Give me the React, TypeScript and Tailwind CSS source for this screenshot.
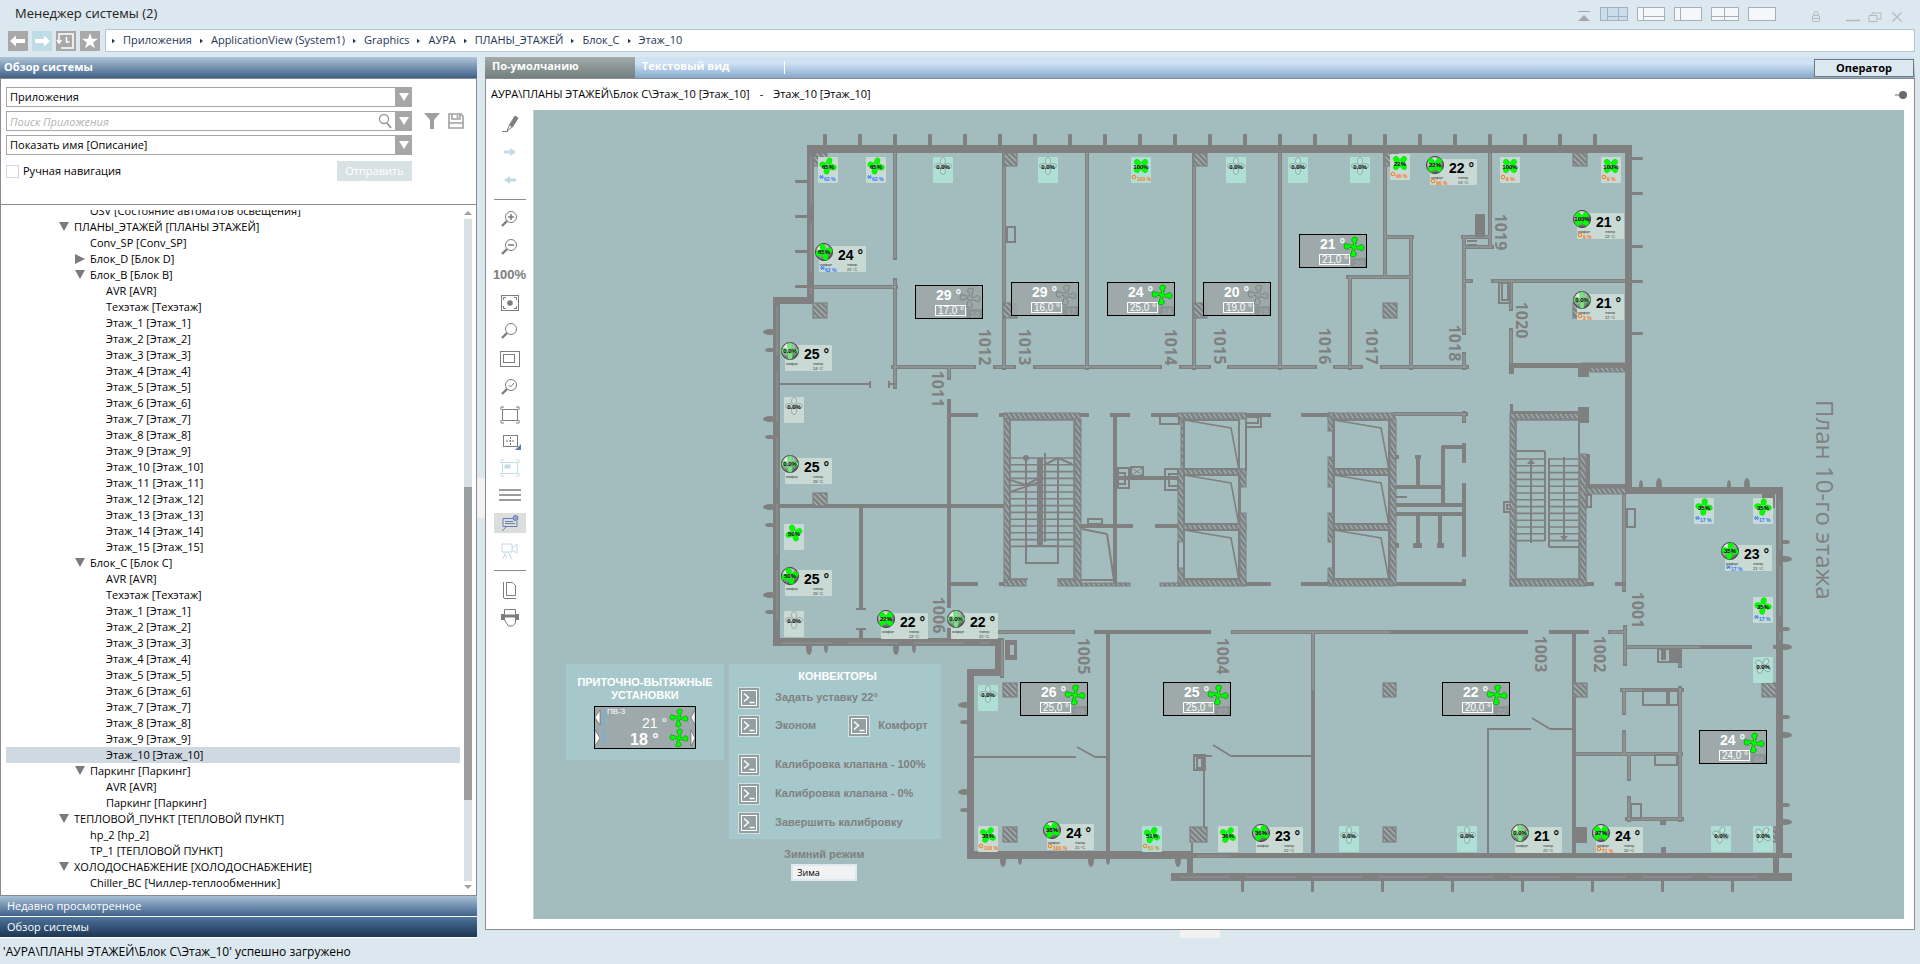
import React from "react";

type TreeItem = { text: string; level: 0 | 1 | 2; state?: "open" | "closed"; selected?: boolean };

const floors = (last: number): TreeItem[] =>
  Array.from({ length: last }, (_, i) => ({ text: `Этаж_${i + 1} [Этаж_${i + 1}]`, level: 2 as const }));

const floorsC = floors(10).map((f, i) => (i === 9 ? { ...f, selected: true } : f));

const TREE: TreeItem[] = [
  { text: "OSV [Состояние автоматов освещения]", level: 1 },
  { text: "ПЛАНЫ_ЭТАЖЕЙ [ПЛАНЫ ЭТАЖЕЙ]", level: 0, state: "open" },
  { text: "Conv_SP [Conv_SP]", level: 1 },
  { text: "Блок_D [Блок D]", level: 1, state: "closed" },
  { text: "Блок_B [Блок B]", level: 1, state: "open" },
  { text: "AVR [AVR]", level: 2 },
  { text: "Техэтаж [Техэтаж]", level: 2 },
  ...floors(15),
  { text: "Блок_C [Блок C]", level: 1, state: "open" },
  { text: "AVR [AVR]", level: 2 },
  { text: "Техэтаж [Техэтаж]", level: 2 },
  ...floorsC,
  { text: "Паркинг [Паркинг]", level: 1, state: "open" },
  { text: "AVR [AVR]", level: 2 },
  { text: "Паркинг [Паркинг]", level: 2 },
  { text: "ТЕПЛОВОЙ_ПУНКТ [ТЕПЛОВОЙ ПУНКТ]", level: 0, state: "open" },
  { text: "hp_2 [hp_2]", level: 1 },
  { text: "TP_1 [ТЕПЛОВОЙ ПУНКТ]", level: 1 },
  { text: "ХОЛОДОСНАБЖЕНИЕ [ХОЛОДОСНАБЖЕНИЕ]", level: 0, state: "open" },
  { text: "Chiller_BC [Чиллер-теплообменник]", level: 1 },
];

const CRUMBS = ["Приложения", "ApplicationView (System1)", "Graphics", "АУРА", "ПЛАНЫ_ЭТАЖЕЙ", "Блок_C", "Этаж_10"];

/* ---------- floor plan geometry ---------- */

type Seg = [number, number, number, number];

// Outer and solid walls: x, y, width, height
const SOLID: Seg[] = [
  [807, 145, 825, 8], [807, 145, 7, 157], [773, 297, 39, 5], [773, 297, 7, 348], [773, 638, 228, 8],
  [1625, 145, 7, 343], [1625, 487, 158, 7], [1776, 487, 7, 371], [1762, 494, 13, 14],
  [995, 640, 6, 34], [967, 669, 34, 7], [967, 669, 7, 190], [967, 851, 226, 8],
  [1190, 853, 602, 5], [1171, 873, 621, 8], [1187, 851, 6, 26], [1773, 853, 6, 24],
  [1475, 214, 10, 23], [1511, 363, 114, 5], [1509, 363, 5, 11], [1578, 367, 11, 10],
  [1573, 827, 14, 16], [1586, 484, 40, 4], [1586, 454, 4, 33], [1578, 407, 11, 16], [1511, 411, 70, 3], [1510, 404, 3, 10],
  [1661, 649, 5, 11], [1669, 649, 10, 12], [1666, 690, 4, 15], [1660, 820, 6, 5], [1661, 847, 5, 6],
  [1037, 458, 6, 88], [1413, 543, 9, 5], [1415, 455, 6, 4], [1437, 543, 7, 5], [1395, 543, 4, 5], [1395, 455, 4, 4], [1773, 645, 9, 4],
];

// Interior solid partitions: x1, y1, x2, y2
const WALLS: Seg[] = [
  [949, 399, 949, 608], [949, 628, 949, 638], [949, 415, 978, 415], [999, 415, 1089, 415],
  [780, 506, 1004, 506], [861, 508, 861, 609], [861, 629, 861, 638], [949, 584, 978, 584], [999, 584, 1006, 584],
  [1115, 415, 1115, 583], [1110, 415, 1130, 415], [1151, 415, 1180, 415], [1081, 526, 1133, 526], [1155, 526, 1178, 526],
  [1117, 478, 1178, 478], [1246, 415, 1271, 415], [1246, 584, 1271, 584], [1301, 415, 1328, 415], [1301, 584, 1328, 584],
  [1442, 447, 1466, 447], [1464, 443, 1464, 463], [1443, 446, 1443, 503], [1396, 487, 1443, 487], [1396, 505, 1465, 505],
  [1396, 514, 1465, 514], [1464, 483, 1464, 557], [1418, 457, 1418, 487], [1418, 514, 1418, 546], [1440, 514, 1440, 546],
  [1396, 584, 1466, 584], [1464, 579, 1464, 586], [1586, 584, 1594, 584], [1615, 584, 1626, 584],
  [1094, 632, 1211, 632], [1390, 632, 1528, 632], [1549, 632, 1589, 632],
  [1108, 632, 1108, 853], [1313, 690, 1313, 853], [1574, 632, 1574, 853], [1700, 647, 1752, 647],
];

const DOUBLE: Seg[] = [
  [895, 153, 895, 258], [814, 287, 896, 287], [895, 280, 895, 387], [1004, 153, 1004, 368], [1087, 153, 1087, 368],
  [1194, 153, 1194, 368], [893, 367, 974, 367], [995, 367, 1014, 367], [1035, 367, 1160, 367], [1181, 367, 1209, 367],
  [1229, 367, 1315, 367], [1335, 367, 1361, 367], [1382, 367, 1467, 367], [949, 367, 949, 378],
  [1280, 153, 1280, 368], [1385, 153, 1385, 276], [1385, 237, 1412, 237], [1411, 237, 1411, 368], [1348, 277, 1411, 277],
  [1350, 277, 1350, 368], [1490, 153, 1490, 247], [1463, 237, 1490, 237], [1464, 237, 1464, 333], [1464, 247, 1492, 247],
  [1464, 281, 1471, 281], [1464, 354, 1464, 368], [1493, 281, 1625, 281], [1511, 281, 1511, 309], [1511, 330, 1511, 365],
  [1395, 414, 1466, 414], [1464, 413, 1464, 421], [1624, 494, 1624, 590],
  [999, 632, 1073, 632], [1233, 632, 1390, 632], [1610, 632, 1625, 632], [1625, 627, 1625, 664], [1627, 647, 1700, 647],
  [1313, 632, 1313, 690], [1680, 648, 1680, 666], [1622, 690, 1682, 690], [1624, 690, 1624, 713], [1680, 688, 1680, 820], [1624, 732, 1624, 754],
  [1576, 754, 1681, 754], [1629, 754, 1629, 779], [1629, 798, 1629, 820], [1627, 819, 1682, 819], [1002, 640, 1002, 676],
];

const THIN: Seg[] = [
  [780, 384, 870, 384], [870, 381, 870, 388], [889, 384, 896, 384], [889, 381, 889, 388], [779, 303, 813, 303],
  [974, 757, 1076, 757], [1095, 757, 1107, 757], [1077, 747, 1095, 757], [1231, 756, 1312, 756], [1213, 745, 1231, 756],
  [1194, 756, 1212, 756], [1204, 757, 1204, 828], [1192, 843, 1192, 852], [1488, 728, 1488, 853], [1488, 729, 1531, 729],
  [1550, 729, 1574, 729], [1532, 718, 1550, 729], [1467, 241, 1477, 241], [1467, 245, 1477, 245], [1081, 580, 1115, 580],
  [1082, 529, 1107, 534], [1107, 534, 1114, 580], [1396, 497, 1407, 497], [1010, 480, 1026, 485], [1026, 485, 1039, 478],
  [1010, 492, 1040, 482], [1046, 464, 1058, 458], [1058, 458, 1072, 464], [1045, 453, 1045, 542], [1026, 458, 1026, 546],
  [1058, 458, 1058, 546], [1246, 420, 1246, 470], [1240, 487, 1240, 513], [1178, 542, 1178, 570], [1333, 431, 1333, 457],
  [1333, 487, 1333, 513], [1333, 542, 1333, 568], [1579, 420, 1579, 454],
  [1516, 451, 1545, 451], [1545, 451, 1545, 541], [1549, 458, 1549, 547], [1549, 547, 1579, 547], [1531, 461, 1531, 543], [1564, 457, 1564, 541],
  [856, 609, 866, 609], [856, 629, 866, 629],
];

// Outlined ducts and shafts
const BOXES: Seg[] = [
  [1007, 227, 8, 15], [1499, 283, 11, 20], [1502, 283, 6, 17], [1088, 519, 14, 5], [1118, 468, 11, 20], [1118, 473, 7, 11],
  [1131, 467, 12, 9], [1165, 469, 13, 21], [1169, 474, 9, 12], [1026, 546, 32, 17], [1246, 417, 15, 10], [1246, 417, 12, 6],
  [1504, 502, 7, 10], [1507, 505, 4, 4], [1587, 495, 4, 12], [1627, 509, 8, 18], [1194, 755, 11, 15], [1197, 758, 5, 10],
  [1658, 649, 22, 13], [1643, 690, 35, 15], [1655, 755, 22, 10], [1631, 804, 10, 14], [1160, 416, 19, 8],
];

// Hatched columns
const HATCH: Seg[] = [
  [814, 153, 13, 13], [813, 303, 14, 15], [1004, 153, 13, 13], [1003, 303, 14, 15], [1194, 153, 13, 13], [1194, 303, 13, 15],
  [1385, 153, 13, 13], [1383, 303, 14, 15], [1573, 153, 14, 13], [1573, 303, 14, 15], [813, 493, 14, 13], [813, 576, 14, 14],
  [1003, 683, 14, 14], [1003, 827, 14, 15], [1193, 683, 14, 14], [1190, 827, 17, 15], [1383, 683, 13, 14], [1383, 827, 13, 15],
  [1573, 683, 14, 14], [1762, 683, 14, 14], [1762, 827, 14, 15],
];

// Hatched structural walls of the staircases and lift shafts
const CORE: Seg[] = [
  [1004, 413, 76, 6], [1004, 419, 6, 166], [1075, 419, 6, 166], [1004, 580, 22, 6], [1058, 580, 23, 6], [1081, 583, 49, 3],
  [1178, 413, 68, 6], [1178, 469, 68, 6], [1178, 524, 68, 6], [1178, 580, 68, 6], [1178, 469, 6, 73], [1178, 568, 6, 16], [1181, 419, 3, 50],
  [1240, 469, 6, 18], [1240, 513, 6, 72], [1160, 583, 20, 3],
  [1328, 413, 67, 6], [1333, 469, 62, 6], [1333, 524, 62, 6], [1328, 580, 67, 6], [1390, 419, 6, 166],
  [1328, 413, 5, 18], [1328, 457, 5, 30], [1328, 513, 5, 29], [1328, 568, 5, 16],
  [1510, 413, 70, 6], [1510, 419, 5, 166], [1580, 454, 6, 130], [1510, 580, 76, 6],
  [1586, 488, 40, 6], [1582, 363, 43, 9],
];

const CABINS: [number, number][] = [
  [1184, 420], [1184, 475], [1184, 530], [1334, 420], [1334, 475], [1334, 530],
];

const TOP_TICKS = Array.from({ length: 23 }, (_, i) => 825 + i * 35);
const BOTTOM_TICKS = Array.from({ length: 8 }, (_, i) => 1243 + i * 70);

// Mullions: centre x, centre y, rx, ry
const MULLIONS: Seg[] = [
  ...[332, 419, 507, 595].map((y): Seg => [770, y, 7, 3]),
  ...[350, 437, 525, 612].map((y): Seg => [770, y, 5, 2]),
  ...[809, 896].map((x): Seg => [x, 648, 3, 7]),
  ...[826, 914].map((x): Seg => [x, 647, 2, 6]),
  ...[705, 792].map((y): Seg => [965, y, 7, 3]),
  ...[722, 810].map((y): Seg => [965, y, 5, 2]),
  ...[1003, 1091, 1178].map((x): Seg => [x, 860, 3, 7]),
  ...[1020, 1108].map((x): Seg => [x, 859, 2, 6]),
  ...[1659, 1747].map((x): Seg => [x, 485, 3, 7]),
  ...[1641, 1729].map((x): Seg => [x, 486, 2, 6]),
  ...[559, 647, 735, 822].map((y): Seg => [1785, y, 7, 3]),
  ...[542, 629, 717, 805].map((y): Seg => [1785, y, 5, 2]),
];

const ROOMS: [string, number, number][] = [
  ["1012", 985, 347], ["1013", 1025, 347], ["1014", 1171, 347], ["1011", 938, 389], ["1015", 1220, 346], ["1016", 1325, 346],
  ["1017", 1372, 346], ["1018", 1455, 343], ["1019", 1501, 232], ["1020", 1522, 320], ["1006", 939, 615], ["1001", 1638, 610],
  ["1005", 1084, 656], ["1004", 1223, 656], ["1003", 1541, 654], ["1002", 1600, 654],
];

type Valve = { kind: "cold" | "hot"; value: string };
type Tile = { x: number; y: number; mint?: boolean; pct?: string; valve?: Valve; turn?: number };

const cold = (value: string): Valve => ({ kind: "cold", value });
const hot = (value: string): Valve => ({ kind: "hot", value });

const TILES: Tile[] = [
  { x: 818, y: 157, pct: "65%", valve: cold("62 %"), turn: 15 },
  { x: 866, y: 157, pct: "65%", valve: cold("62 %"), turn: 15 },
  { x: 933, y: 157, mint: true },
  { x: 1038, y: 157, mint: true },
  { x: 1131, y: 157, mint: true, pct: "100%", valve: hot("100 %"), turn: 45 },
  { x: 1226, y: 157, mint: true },
  { x: 1288, y: 157, mint: true },
  { x: 1350, y: 157, mint: true },
  { x: 1390, y: 154, pct: "22%", valve: hot("96 %"), turn: 45 },
  { x: 1500, y: 157, pct: "100%", valve: hot("9 %"), turn: 45 },
  { x: 1601, y: 157, pct: "100%", valve: hot("9 %"), turn: 45 },
  { x: 784, y: 397 },
  { x: 784, y: 524, pct: "50%", turn: -20 },
  { x: 784, y: 611 },
  { x: 1694, y: 498, pct: "35%", valve: cold("17 %"), turn: 8 },
  { x: 1753, y: 498, pct: "35%", valve: cold("17 %"), turn: 8 },
  { x: 1753, y: 597, pct: "35%", valve: cold("17 %"), turn: 8 },
  { x: 1753, y: 657, mint: true, turn: 35 },
  { x: 978, y: 685, mint: true },
  { x: 978, y: 826, pct: "38%", valve: hot("100 %"), turn: 30 },
  { x: 1142, y: 826, mint: true, pct: "51%", valve: hot("51 %"), turn: 25 },
  { x: 1218, y: 826, pct: "36%", turn: 30 },
  { x: 1339, y: 826, mint: true },
  { x: 1457, y: 826, mint: true },
  { x: 1711, y: 826, mint: true, turn: 15 },
  { x: 1753, y: 826, mint: true, turn: 35 },
];

type Card = { x: number; y: number; temp: number; room: number; pct?: string; valve?: Valve; turn?: number };

const CARDS: Card[] = [
  { x: 819, y: 246, temp: 24, room: 21, pct: "65%", valve: cold("62 %"), turn: -15 },
  { x: 785, y: 345, temp: 25, room: 24 },
  { x: 785, y: 458, temp: 25, room: 26 },
  { x: 785, y: 570, temp: 25, room: 26, pct: "50%", turn: -15 },
  { x: 881, y: 613, temp: 22, room: 22, pct: "22%", turn: 45 },
  { x: 951, y: 613, temp: 22, room: 22 },
  { x: 1430, y: 159, temp: 22, room: 23, pct: "22%", valve: hot("96 %"), turn: 45 },
  { x: 1577, y: 213, temp: 21, room: 22, pct: "100%", valve: hot("9 %"), turn: 45 },
  { x: 1577, y: 294, temp: 21, room: 22, valve: hot("3 %") },
  { x: 1725, y: 545, temp: 23, room: 21, pct: "35%", valve: cold("17 %"), turn: 8 },
  { x: 1047, y: 824, temp: 24, room: 21, pct: "38%", valve: hot("100 %"), turn: 30 },
  { x: 1256, y: 827, temp: 23, room: 22, pct: "36%", turn: 30 },
  { x: 1515, y: 827, temp: 21, room: 22 },
  { x: 1596, y: 827, temp: 24, room: 20, pct: "97%", valve: hot("71 %"), turn: 45 },
];

type Zone = { x: number; y: number; temp: number; set: string; id: string; on: boolean };

const ZONES: Zone[] = [
  { x: 915, y: 285, temp: 29, set: "17,0", id: "16", on: false },
  { x: 1011, y: 282, temp: 29, set: "16,0", id: "17", on: false },
  { x: 1107, y: 282, temp: 24, set: "25,0", id: "18", on: true },
  { x: 1203, y: 282, temp: 20, set: "19,0", id: "19", on: false },
  { x: 1299, y: 234, temp: 21, set: "21,0", id: "20", on: true },
  { x: 1020, y: 682, temp: 26, set: "25,0", id: "09", on: true },
  { x: 1163, y: 682, temp: 25, set: "25,0", id: "07", on: true },
  { x: 1442, y: 682, temp: 22, set: "20,0", id: "22", on: true },
  { x: 1699, y: 730, temp: 24, set: "24,0", id: "04", on: true },
];

const QUARTERS = [0, 90, 180, 270];

/** Four rounded blades, used on the convector symbols. */
function Blades({ on, turn = 0, dim }: { on: boolean; turn?: number; dim?: boolean }) {
  return (
    <g transform={`rotate(${turn})`}>
      {QUARTERS.map((a) => (
        <ellipse
          key={a}
          cx="0"
          cy="-5"
          rx={on ? 2.8 : 2.5}
          ry="3.5"
          transform={`rotate(${a})`}
          fill={on ? "#00ff00" : dim ? "#7fe08a" : "#ffffff22"}
          stroke={on || dim ? "#16b816" : "#8f9a96"}
          strokeWidth={on || dim ? 0.3 : 0.8}
        />
      ))}
    </g>
  );
}

const BLADE = "M-1 0 L-1.2 -4 C-3 -4.8 -4.3 -6 -3.6 -8.2 C-2.8 -10.2 0.6 -10.4 2.2 -9 C1 -7.6 1.2 -4 1.4 0 Z";

/** Propeller with swept blades, used on the air handling symbols. */
function Propeller({ on }: { on: boolean }) {
  return (
    <g transform="rotate(12)">
      {QUARTERS.map((a) => (
        <path key={a} d={BLADE} transform={`rotate(${a})`} fill={on ? "#00ff00" : "#9ba6a6"} stroke={on ? "#0f9a0f" : "#747c7c"} strokeWidth="0.8" />
      ))}
      <circle r="2" fill={on ? "#00ff00" : "#9ba6a6"} />
    </g>
  );
}

function ValveMark({ valve, x, y }: { valve: Valve; x: number; y: number }) {
  const tint = valve.kind === "cold" ? "#1f78ff" : "#ff7514";
  return (
    <g>
      {valve.kind === "cold" ? (
        <path d={`M${x} ${y}h5M${x + 1} ${y - 2}l3 4M${x + 4} ${y - 2}l-3 4`} stroke={tint} strokeWidth="0.8" />
      ) : (
        <circle cx={x + 2} cy={y} r="1.8" fill="none" stroke={tint} strokeWidth="1" />
      )}
      <text x={x + 5} y={y + 4} fontSize="5" fontWeight="700" fill={tint}>
        {valve.value}
      </text>
    </g>
  );
}

function TileMark({ tile }: { tile: Tile }) {
  return (
    <g transform={`translate(${tile.x} ${tile.y})`}>
      <rect width="20" height="26" rx="1" fill={tile.mint ? "#afe0d6" : "#c9d9d3"} />
      <g transform="translate(10 9)">
        <Blades on={!!tile.pct} turn={tile.turn} />
      </g>
      <text x="10" y="12" fontSize="6" fontWeight="700" textAnchor="middle" fill="#000">
        {tile.pct ?? "0.0%"}
      </text>
      {tile.valve && <ValveMark valve={tile.valve} x={1} y={20} />}
    </g>
  );
}

function CardMark({ card }: { card: Card }) {
  return (
    <g transform={`translate(${card.x} ${card.y})`}>
      <rect width="47" height="26" rx="1" fill="#c9d9d3" />
      <circle cx="5" cy="6" r="8.5" fill="url(#ball)" stroke="#3c3c3c" strokeWidth="1" />
      <g transform="translate(5 6)">
        <Blades on={!!card.pct} dim={!card.pct} turn={card.turn} />
      </g>
      <text x="5" y="8" fontSize="6" fontWeight="700" textAnchor="middle" fill="#000">
        {card.pct ?? "0.0%"}
      </text>
      <text x="19" y="14" fontSize="14" fontWeight="700" fill="#000">
        {card.temp} °
      </text>
      <text x="1" y="20" fontSize="3" fill="#333">
        комфорт
      </text>
      <text x="28" y="20" fontSize="3" fill="#333">
        темпер.
      </text>
      <text x="28" y="25" fontSize="4" fill="#333">
        {card.room} °C
      </text>
      {card.valve && <ValveMark valve={card.valve} x={1} y={22} />}
    </g>
  );
}

function ZoneMark({ zone }: { zone: Zone }) {
  return (
    <g transform={`translate(${zone.x} ${zone.y})`}>
      <rect x="0.5" y="0.5" width="67" height="33" fill="#9da7a7" fillOpacity="0.93" stroke="#000" />
      <rect x="52" y="24" width="15" height="9" fill="#8c9595" />
      <text x="60" y="32" fontSize="8" textAnchor="middle" fill="#a9b1b1">
        {zone.id}
      </text>
      <text x="21" y="15" fontSize="14" fontWeight="700" fill="#fff">
        {zone.temp} °
      </text>
      <rect x="20.5" y="20.5" width="30" height="10" fill="none" stroke="#fff" />
      <text x="36" y="29" fontSize="10" textAnchor="middle" fill="#fff">
        {zone.set} °
      </text>
      <g transform="translate(55 13)">
        <Propeller on={zone.on} />
      </g>
    </g>
  );
}

const lines = (list: Seg[]) => list.map(([a, b, c, d]) => `M${a} ${b}L${c} ${d}`).join("");

function FloorPlan() {
  return (
    <svg viewBox="534 110 1370 809" className="h-[809px] w-[1370px]" fontFamily="'Liberation Sans', Arial, sans-serif" aria-label="План 10-го этажа">
      <defs>
        <pattern id="hatch" width="4" height="4" patternUnits="userSpaceOnUse" patternTransform="rotate(-45)">
          <rect width="4" height="4" fill="#808080" />
          <rect width="1.2" height="4" fill="#a3bdbe" />
        </pattern>
        <pattern id="core" width="4" height="4" patternUnits="userSpaceOnUse" patternTransform="rotate(-35)">
          <rect width="4" height="4" fill="#7d7f80" />
          <rect width="1.3" height="4" fill="#9fb6b7" />
        </pattern>
        <radialGradient id="ball" cx="0.35" cy="0.25" r="0.8">
          <stop offset="0" stopColor="#ffffff" />
          <stop offset="0.6" stopColor="#9aa09d" />
          <stop offset="1" stopColor="#4c504e" />
        </radialGradient>
      </defs>

      <g fill="#808080">
        {TOP_TICKS.map((x) => (
          <rect key={x} x={x - 2} y="134" width="4" height="12" rx="1" />
        ))}
        {BOTTOM_TICKS.map((x) => (
          <rect key={x} x={x - 2} y="880" width="3" height="12" rx="1" />
        ))}
        {[182, 217, 252, 287].map((y) => (
          <rect key={y} x="795" y={y - 2} width="13" height="3" rx="1" />
        ))}
        {[158, 193, 246, 281, 333].map((y) => (
          <rect key={y} x="1631" y={y - 1} width="12" height="3" rx="1" />
        ))}
        {MULLIONS.map(([cx, cy, rx, ry], i) => (
          <ellipse key={i} cx={cx} cy={cy} rx={rx} ry={ry} />
        ))}
      </g>

      <path d={lines(DOUBLE)} stroke="#808080" strokeWidth="4" strokeLinecap="square" />
      <path d={lines(DOUBLE)} stroke="#97a5a5" strokeWidth="1" />
      <path d={lines(WALLS)} stroke="#808080" strokeWidth="4" />
      <path d={lines(THIN)} stroke="#808080" strokeWidth="2" />

      {BOXES.map(([x, y, w, h], i) => (
        <rect key={i} x={x} y={y} width={w} height={h} fill="none" stroke="#808080" strokeWidth="2" />
      ))}
      <path d="M1132 468l10 7M1142 468l-10 7" stroke="#808080" strokeWidth="1" />
      <path fillRule="evenodd" d="M1005 640h12v20h-12z M1010 645v10h4v-10z" fill="#808080" />

      {HATCH.map(([x, y, w, h], i) => (
        <rect key={i} x={x} y={y} width={w} height={h} fill="url(#hatch)" stroke="#808080" strokeWidth="1.2" />
      ))}
      {CORE.map(([x, y, w, h], i) => (
        <rect key={i} x={x} y={y} width={w} height={h} fill="url(#core)" stroke="#808080" strokeWidth="1" />
      ))}
      {SOLID.map(([x, y, w, h], i) => (
        <rect key={i} x={x} y={y} width={w} height={h} fill="#808080" />
      ))}
      <path d="M811 156V294M777 306V636M782 643H990M1197 856H1230M1180 877H1760M1780 500V640" stroke="#8e9797" strokeWidth="1" strokeDasharray="50 16" />

      {/* lift cabins */}
      {CABINS.map(([x, y], i) => (
        <g key={i} fill="none" stroke="#808080">
          <rect x={x} y={y} width="55" height="49" strokeWidth="2" />
          <path d={`M${x} ${y}l47 8l8 42`} strokeWidth="1.6" />
        </g>
      ))}

      {/* staircases */}
      <rect x="1010" y="420" width="64" height="159" fill="none" stroke="#808080" strokeWidth="1.6" />
      <rect x="1516" y="420" width="63" height="159" fill="none" stroke="#808080" strokeWidth="1.6" />
      {Array.from({ length: 14 }, (_, i) => (
        <path key={i} d={`M1010 ${458 + i * 6.8}H1074`} stroke="#808080" strokeWidth="1.6" />
      ))}
      {Array.from({ length: 13 }, (_, i) => (
        <path key={i} d={`M1516 ${459 + i * 6.8}H1545M1549 ${459 + i * 6.8}H1579`} stroke="#808080" strokeWidth="1.6" />
      ))}
      <circle cx="1026" cy="458" r="3" fill="#808080" />
      <path d="M1531 459l-4 5h8zM1564 541l-4 -5h8z" fill="#808080" />
      <path d="M1028 579H1057" stroke="#a3bdbe" strokeWidth="3" />

      <g fill="#808080" fontFamily="'Open Sans', 'Noto Sans', sans-serif">
        {ROOMS.map(([name, x, y]) => (
          <text key={name} transform={`translate(${x - 6} ${y}) rotate(90)`} fontSize="16" fontWeight="700" textAnchor="middle">
            {name}
          </text>
        ))}
        <text transform="translate(1816 400) rotate(90)" fontSize="24">
          План 10-го этажа
        </text>
      </g>

      {ZONES.map((z) => (
        <ZoneMark key={z.id} zone={z} />
      ))}
      {TILES.map((t, i) => (
        <TileMark key={i} tile={t} />
      ))}
      {CARDS.map((c, i) => (
        <CardMark key={i} card={c} />
      ))}
    </svg>
  );
}

/* ---------- control panels on the canvas ---------- */

function CommandButton({ label }: { label: string }) {
  return (
    <button type="button" aria-label={label} className="flex size-[22px] shrink-0 items-center justify-center border border-[#d5dfdf] bg-[#93a0a1]">
      <svg viewBox="0 0 16 16" className="size-4" fill="none" stroke="#fff">
        <rect x="0.5" y="0.5" width="15" height="15" />
        <path d="M3 3.5l4.5 4l-4.5 4M8.500 12.500h5" strokeWidth="1.5" />
      </svg>
    </button>
  );
}

function CommandRow({ label }: { label: string }) {
  return (
    <div className="flex h-[22px] items-center gap-[15px]">
      <CommandButton label={label} />
      <span className="-mt-0.5">{label}</span>
    </div>
  );
}

function AirUnits() {
  return (
    <section className="absolute left-8 top-[554px] flex h-24 w-[158px] flex-col items-center bg-[#a7c8cb] pt-3">
      <h2 className="text-center text-[11px] leading-[13px] font-bold text-white">
        ПРИТОЧНО-ВЫТЯЖНЫЕ
        <br />
        УСТАНОВКИ
      </h2>
      <svg viewBox="0 0 102 43" className="mt-1 h-[43px] w-[102px]">
        <rect x="0.5" y="0.5" width="101" height="42" fill="#9da9aa" stroke="#000" />
        <path d="M6 4v15l-5 -7.500zM1 24l5 8l-5 8zM101 4v15l-4 -7.500zM97 24l4 8l-4 8z" fill="#fff" stroke="#555" strokeWidth="0.6" />
        <path d="M11 4l-1 6v10M11 38l-1 -5v-10" fill="none" stroke="#6fb4d6" strokeWidth="2" />
        <g fill="#fff">
          <text x="13" y="8" fontSize="8">ПВ-3</text>
          <text x="48" y="22" fontSize="14">21 °</text>
          <text x="36" y="39" fontSize="16" fontWeight="700">18 °</text>
        </g>
        <g transform="translate(85 12) scale(0.9)">
          <Propeller on />
        </g>
        <g transform="translate(85 32) scale(0.9)">
          <Propeller on />
        </g>
      </svg>
    </section>
  );
}

function Convectors() {
  return (
    <section className="absolute left-[195px] top-[554px] h-[175px] w-[212px] bg-[#a7c8cb] pt-[6px] pl-[9px] text-[11px] leading-[13px] font-bold text-[#808080]">
      <h2 className="pr-1 text-center text-white">КОНВЕКТОРЫ</h2>
      <div className="mt-1 flex flex-col gap-[6px]">
        <CommandRow label="Задать уставку 22°" />
        <div className="flex gap-8">
          <CommandRow label="Эконом" />
          <div className="flex h-[22px] items-center gap-2">
            <CommandButton label="Комфорт" />
            <span className="-mt-0.5">Комфорт</span>
          </div>
        </div>
        <div className="mt-[11px] flex flex-col gap-[7px]">
          <CommandRow label="Калибровка клапана - 100%" />
          <CommandRow label="Калибровка клапана - 0%" />
          <CommandRow label="Завершить калибровку" />
        </div>
      </div>
    </section>
  );
}

function WinterMode() {
  return (
    <div className="absolute left-[250px] top-[738px] flex flex-col items-center gap-[3px]">
      <label htmlFor="winter" className="text-[11px] leading-[13px] font-bold text-[#808080]">
        Зимний режим
      </label>
      <input
        id="winter"
        defaultValue="Зима"
        readOnly
        className="h-[17px] w-[66px] border-2 border-[#dde8f0] bg-[#f1f2f3] px-1 font-['Open_Sans',sans-serif] text-[9px] text-black"
      />
    </div>
  );
}

/* ---------- toolbar ---------- */

const Lens = ({ children }: { children?: React.ReactNode }) => (
  <>
    <circle cx="12" cy="8" r="5.500" strokeWidth="1" />
    <path d="M8 12L3 17" strokeWidth="2.400" />
    {children}
  </>
);

const Corners = () => <path d="M2 5V2h3M17 2h3v3M20 15v3h-3M5 18H2v-3" strokeWidth="1" />;

function Tool({ label, short, active, pale, children }: { label: string; short?: boolean; active?: boolean; pale?: boolean; children: React.ReactNode }) {
  return (
    <div className={short ? "flex h-[26px] items-center" : "flex h-7 items-center"}>
      <button
        type="button"
        aria-label={label}
        className={`flex h-5 w-8 items-center justify-center ${active ? "bg-[#dcdddd] text-[#6683b0]" : pale ? "text-[#bfdce3]" : "text-[#7b7d7e]"}`}
      >
        {children}
      </button>
    </div>
  );
}

const Glyph = ({ children }: { children: React.ReactNode }) => (
  <svg viewBox="0 0 22 20" className="h-5 w-[22px]" fill="none" stroke="currentColor" strokeWidth="1">
    {children}
  </svg>
);

const Divider = () => (
  <div className="flex h-[11px] w-8 items-center">
    <hr className="w-full border-[#8b8b8d]" />
  </div>
);

function Toolbar() {
  return (
    <div className="flex w-12 shrink-0 flex-col items-center border-r border-[#c8cccd]">
      <Tool label="Правка"><Glyph><path d="M16 2l3 2l-5.500 9l-3 -2z" fill="currentColor" /><path d="M10.500 11L8 17l5 -4M3 17.500h6" /></Glyph></Tool>
      <Tool label="Вперёд" pale><Glyph><path d="M5 8.500h6V6l6 4l-6 4v-2.500H5z" fill="currentColor" stroke="none" /></Glyph></Tool>
      <Tool label="Назад" pale><Glyph><path d="M17 8.500h-6V6l-6 4l6 4v-2.500h6z" fill="currentColor" stroke="none" /></Glyph></Tool>
      <Divider />
      <Tool label="Увеличить"><Glyph><Lens><path d="M9 8h6M12 5v6" strokeWidth="1.6" /></Lens></Glyph></Tool>
      <Tool label="Уменьшить"><Glyph><Lens><path d="M9 8h6" strokeWidth="1.6" /></Lens></Glyph></Tool>
      <Tool label="Масштаб 100%"><span className="font-['Liberation_Sans',Arial,sans-serif] text-[13px] font-bold">100%</span></Tool>
      <Tool label="По центру"><Glyph><rect x="2.500" y="2.500" width="17" height="15" strokeWidth="1" /><circle cx="11" cy="10" r="2.800" fill="currentColor" stroke="none" /><path d="M4.500 7V4.500H7M15 4.500h2.500V7M17.500 13v2.500H15M7 15.500H4.500V13" /></Glyph></Tool>
      <Tool label="Лупа"><Glyph><Lens /></Glyph></Tool>
      <Tool label="Обзор"><Glyph><rect x="1.500" y="2.500" width="19" height="15" /><rect x="4.500" y="5.500" width="11" height="8" /></Glyph></Tool>
      <Tool label="Выбранный масштаб"><Glyph><Lens><path d="M9.500 8l2 2l3.500 -4" /></Lens></Glyph></Tool>
      <Tool label="Вписать"><Glyph><Corners /><rect x="3.500" y="4.500" width="15" height="11" /></Glyph></Tool>
      <Tool label="Разделить" short><Glyph><rect x="4.500" y="3.500" width="14" height="11" /><path d="M11.500 5v8M7 9h9" strokeDasharray="2 1" /><path d="M22 12v6h-6z" fill="#5b7fb5" stroke="none" /></Glyph></Tool>
      <Tool label="Область" short pale><Glyph><Corners /><rect x="3.500" y="4.500" width="15" height="11" /><rect x="6" y="7" width="5" height="3" fill="currentColor" /></Glyph></Tool>
      <Tool label="Слои"><Glyph><path d="M0 5h22M0 10h22M0 15h22" strokeWidth="1.6" /></Glyph></Tool>
      <Tool label="Подсказки" active><Glyph><path d="M14 5.500H4v8h14V8M3 18l4 -4M6 8.500h8M6 10.500h10" /><circle cx="16.500" cy="5" r="2.500" fill="#8fa6cb" /></Glyph></Tool>
      <Tool label="Камера" pale><Glyph><path d="M3 3h10v8H3zM13 7l5 -4v9l-5 -3M7 11l-3 7M9 11l4 7M6 14l2 3" strokeWidth="1" /></Glyph></Tool>
      <Divider />
      <Tool label="Страница"><Glyph><path d="M7.500 2.500h6l3 3v10h-9zM4.500 2v16M5 18.500h12" strokeWidth="1" /></Glyph></Tool>
      <Tool label="Печать"><Glyph><path d="M2 6h18v6H2z" fill="currentColor" stroke="none" /><path d="M5.500 6.500v-5h11v5M5.500 9h11v6l-3 3h-4l-4 -6z" fill="#fff" /></Glyph></Tool>
    </div>
  );
}

/* ---------- window chrome ---------- */

function LayoutIcon({ d, active }: { d: string; active?: boolean }) {
  return (
    <button type="button" aria-label="Раскладка" className="block">
      <svg viewBox="0 0 28 14" className="h-[14px] w-7" fill="none">
        <rect x="0.5" y="0.5" width="27" height="13" fill={active ? "#c9dded" : "#f6f7fa"} stroke="#a3b1bb" />
        <path d={d} stroke="#a3b1bb" />
      </svg>
    </button>
  );
}

function TitleBar() {
  return (
    <header className="flex h-[29px] shrink-0 items-start pr-4 pl-[15px]">
      <h1 className="flex-1 pt-[3px] text-[13px] leading-5 text-[#222]">Менеджер системы (2)</h1>
      <div className="flex items-start gap-[9px] pt-[7px]">
        <svg viewBox="0 0 14 14" className="h-[14px] w-[14px]" fill="#a5a9ab"><path d="M1 4h12v1H1zM7 8l6 6H1z" /></svg>
        <LayoutIcon active d="M7.500 1v12M18.500 1v12M8 9.500h19" />
        <LayoutIcon d="M6.500 1v12M7 9.500h20" />
        <LayoutIcon d="M6.500 1v12" />
        <LayoutIcon d="M13.500 1v12M1 9.500h26" />
        <LayoutIcon d="" />
      </div>
      <div className="ml-[34px] flex items-center gap-2 pt-[10px] text-[#b3b9bc]">
        <svg viewBox="0 0 12 14" className="mr-4 h-[14px] w-3" fill="none" stroke="currentColor"><rect x="2.500" y="5.500" width="7" height="6" rx="1" /><path d="M4 5V3.500a2 2 0 0 1 4 0V5M3 8.500h6" /></svg>
        <button type="button" aria-label="Свернуть"><svg viewBox="0 0 14 14" className="size-[14px]"><path d="M0 10.500h14" stroke="currentColor" strokeWidth="1.500" /></svg></button>
        <button type="button" aria-label="Восстановить"><svg viewBox="0 0 14 14" className="size-[14px]" fill="none" stroke="currentColor"><path d="M1 5.500h8v6H1zM4 5V3h9v6h-3.500" /></svg></button>
        <button type="button" aria-label="Закрыть"><svg viewBox="0 0 14 14" className="size-[14px]"><path d="M2.500 2.500l9 9M11.500 2.500l-9 9" stroke="currentColor" strokeWidth="1.200" /></svg></button>
      </div>
    </header>
  );
}

function NavButton({ label, pale, children }: { label: string; pale?: boolean; children: React.ReactNode }) {
  return (
    <button type="button" aria-label={label} className={`size-5 ${pale ? "bg-[#bfdbe4]" : "bg-[#a8a8a8]"}`}>
      <svg viewBox="0 0 20 20" className="size-5" fill="#fff">{children}</svg>
    </button>
  );
}

function AddressBar() {
  return (
    <div className="flex h-[28px] shrink-0 items-start pr-[5px] pl-2">
      <div className="flex gap-1 pt-[2px] pr-[5px]">
        <NavButton label="Назад"><path d="M2 10l6 -5.500V8h9v4H8v3.500z" /></NavButton>
        <NavButton label="Вперёд" pale><path d="M18 10l-6 -5.500V8H3v4h9v3.500z" /></NavButton>
        <NavButton label="История"><path d="M3 11V3h14v14H5M10.500 6v5h3M1 9l2 3l2.500 -3" fill="none" stroke="#fff" strokeWidth="1.500" /></NavButton>
        <NavButton label="Избранное"><path d="M10 2l2 5.800h6l-4.900 3.600l1.900 5.800l-5 -3.500l-5 3.500l1.900 -5.800L2 7.800h6z" /></NavButton>
      </div>
      <nav className="flex h-[23px] flex-1 items-center gap-2 border border-[#b3c6d8] bg-white pl-[6px] text-[11px] text-[#1d3557]">
        {CRUMBS.map((c) => (
          <React.Fragment key={c}>
            <svg viewBox="0 0 4 6" className="h-[6px] w-[3px]" fill="#1d3557"><path d="M0 0l4 3l-4 3z" /></svg>
            <a href="#">{c}</a>
          </React.Fragment>
        ))}
      </nav>
    </div>
  );
}

/* ---------- left panel ---------- */

const Down = () => (
  <span className="pointer-events-none absolute inset-y-0 right-0 flex w-[17px] items-center justify-center bg-[#a6a6a6]">
    <svg viewBox="0 0 10 8" className="h-2 w-[10px]" fill="#fff"><path d="M0 0h10l-5 8z" /></svg>
  </span>
);

const FIELD = "block h-5 w-full appearance-none rounded-none border border-[#a6a6a6] bg-white px-[3px] text-[11px] leading-4";

function Filters() {
  return (
    <div className="flex h-[126px] shrink-0 flex-col border-b border-[#8b8a92] px-[5px] pt-2">
      <div className="relative w-[406px]">
        <select aria-label="Вид" className={FIELD}><option>Приложения</option></select>
        <Down />
      </div>
      <div className="mt-1 flex items-center gap-3">
        <div className="relative w-[406px]">
          <input aria-label="Поиск" placeholder="Поиск Приложения" className={`${FIELD} italic placeholder:text-[#b3b3b3]`} />
          <svg viewBox="0 0 14 18" className="pointer-events-none absolute top-px right-5 h-[18px] w-[14px]" fill="none" stroke="#999"><circle cx="6" cy="7" r="4.500" strokeWidth="1.300" /><path d="M9 11l4 5" strokeWidth="2" /></svg>
          <Down />
        </div>
        <div className="flex gap-2">
          <button type="button" aria-label="Фильтр"><svg viewBox="0 0 16 16" className="size-4" fill="#a0a0a0"><path d="M0 0h16l-6 7v9H6V7z" /></svg></button>
          <button type="button" aria-label="Сохранить"><svg viewBox="0 0 16 16" className="size-4" fill="none" stroke="#a0a0a0" strokeWidth="1.600"><path d="M1 1h12l2 2v12H1zM4 1v5h8V1M1 10h14M9.500 2v3" /></svg></button>
        </div>
      </div>
      <div className="relative mt-1 w-[406px]">
        <select aria-label="Отображение" className={FIELD}><option>Показать имя [Описание]</option></select>
        <Down />
      </div>
      <div className="mt-[6px] flex w-[406px] items-center justify-between">
        <label className="flex items-center gap-1 text-[11px]">
          <input type="checkbox" className="size-[13px] appearance-none border border-[#d5d5e2] bg-white" />
          Ручная навигация
        </label>
        <button type="button" className="h-5 w-[75px] bg-[#d8e2e4] text-[11px] text-white">Отправить</button>
      </div>
    </div>
  );
}

const INDENT = { 0: "pl-[53px]", 1: "pl-[69px]", 2: "pl-[85px]" };

function Tree() {
  return (
    <div className="flex min-h-0 flex-1 pt-[5px] pl-[5px]">
      <div className="min-h-0 flex-1 overflow-hidden">
        <ul className="-mt-[7px] text-[11px] leading-4">
          {TREE.map((t, i) => (
            <li key={i} className={`flex h-4 items-center ${INDENT[t.level]} ${t.selected ? "bg-[#ced9e2]" : ""}`}>
              <span className="flex w-[15px] shrink-0">
                {t.state && (
                  <svg viewBox="0 0 10 10" className="size-[10px]" fill="#7b7b7b">
                    <path d={t.state === "open" ? "M0 0h10l-5 9z" : "M0 0l10 5l-10 5z"} />
                  </svg>
                )}
              </span>
              <span className="whitespace-nowrap">{t.text}</span>
            </li>
          ))}
        </ul>
      </div>
      <div className="mr-1 ml-1 flex w-2 flex-col items-center gap-1 pt-px pb-[6px]">
        <svg viewBox="0 0 8 4" className="h-1 w-2 shrink-0" fill="#a0a0a0"><path d="M4 0l4 4H0z" /></svg>
        <div className="flex w-full flex-1 flex-col bg-[#d7e1e4]">
          <div className="flex-[266]" />
          <div className="flex-[311] bg-[#9c9fa2]" />
          <div className="flex-[81]" />
        </div>
        <svg viewBox="0 0 8 4" className="h-1 w-2 shrink-0" fill="#a0a0a0"><path d="M0 0h8l-4 4z" /></svg>
      </div>
    </div>
  );
}

export default function App() {
  return (
    <div className="flex h-screen flex-col overflow-hidden bg-[#dce8ef] font-['Open_Sans','Noto_Sans',sans-serif] text-black">
      <TitleBar />
      <AddressBar />
      <div className="flex min-h-0 flex-1">
        <aside className="flex w-[477px] shrink-0 flex-col">
          <h2 className="h-[21px] shrink-0 bg-linear-to-b from-[#b0c5d9] to-[#3f6187] pl-1 text-[11px] leading-5 font-bold text-white">Обзор системы</h2>
          <div className="flex min-h-0 flex-1 flex-col border border-[#8b8a92] bg-white">
            <Filters />
            <Tree />
          </div>
          <div className="flex shrink-0 flex-col gap-px bg-white pb-px text-[11px] text-white">
            <button type="button" className="h-5 bg-linear-to-b from-[#a9bfd6] to-[#40628a] pl-[7px] text-left leading-[18px]">Недавно просмотренное</button>
            <button type="button" className="h-5 bg-linear-to-b from-[#4f749c] to-[#1c3653] pl-[7px] text-left leading-[18px]">Обзор системы</button>
          </div>
        </aside>

        <div className="flex w-2 shrink-0 flex-col justify-start pt-[421px]">
          <div className="h-10 bg-[#f2f2f3]" />
        </div>

        <main className="mr-[5px] flex min-w-0 flex-1 flex-col">
          <div className="flex h-[21px] shrink-0 items-center bg-linear-to-b from-[#cfe1f4] from-30% to-[#86a9cd] pr-px text-[11px] font-bold text-white">
            <button type="button" className="h-[21px] w-[150px] bg-linear-to-b from-[#a4abaa] to-[#72817e] pb-[3px] pl-[7px] text-left">По-умолчанию</button>
            <button type="button" className="flex h-[13px] w-[150px] items-center border-r border-white pb-[3px] pl-[7px] text-left">Текстовый вид</button>
            <span className="flex-1" />
            <button type="button" className="h-[18px] w-[100px] border border-[#70787b] bg-[#dde9f0] leading-4 text-black">Оператор</button>
          </div>
          <div className="flex min-h-0 flex-1 flex-col border border-[#8b8a92] bg-white">
            <div className="flex h-[31px] shrink-0 items-center pr-[6px] pl-[5px] text-[11px]">
              <span>АУРА\ПЛАНЫ ЭТАЖЕЙ\Блок С\Этаж_10 [Этаж_10]</span>
              <span className="px-[10px]">-</span>
              <span className="flex-1">Этаж_10 [Этаж_10]</span>
              <svg viewBox="0 0 13 10" className="h-[10px] w-[13px]" fill="#666a6c"><circle cx="8" cy="5" r="4" /><path d="M0 4.500h5v1H0z" /></svg>
            </div>
            <div className="flex min-h-0 flex-1 pr-[10px] pb-[10px]">
              <Toolbar />
              <div className="relative flex-1 overflow-hidden bg-[#a3bdbe] font-['Liberation_Sans',Arial,sans-serif]">
                <FloorPlan />
                <AirUnits />
                <Convectors />
                <WinterMode />
              </div>
            </div>
          </div>
          <div className="flex h-2 shrink-0 justify-center">
            <div className="h-2 w-10 bg-[#f2f2f3]" />
          </div>
        </main>
      </div>
      <footer className="h-[26px] shrink-0 pl-[3px] text-[12px] leading-[28px]">'АУРА\ПЛАНЫ ЭТАЖЕЙ\Блок С\Этаж_10' успешно загружено</footer>
    </div>
  );
}
